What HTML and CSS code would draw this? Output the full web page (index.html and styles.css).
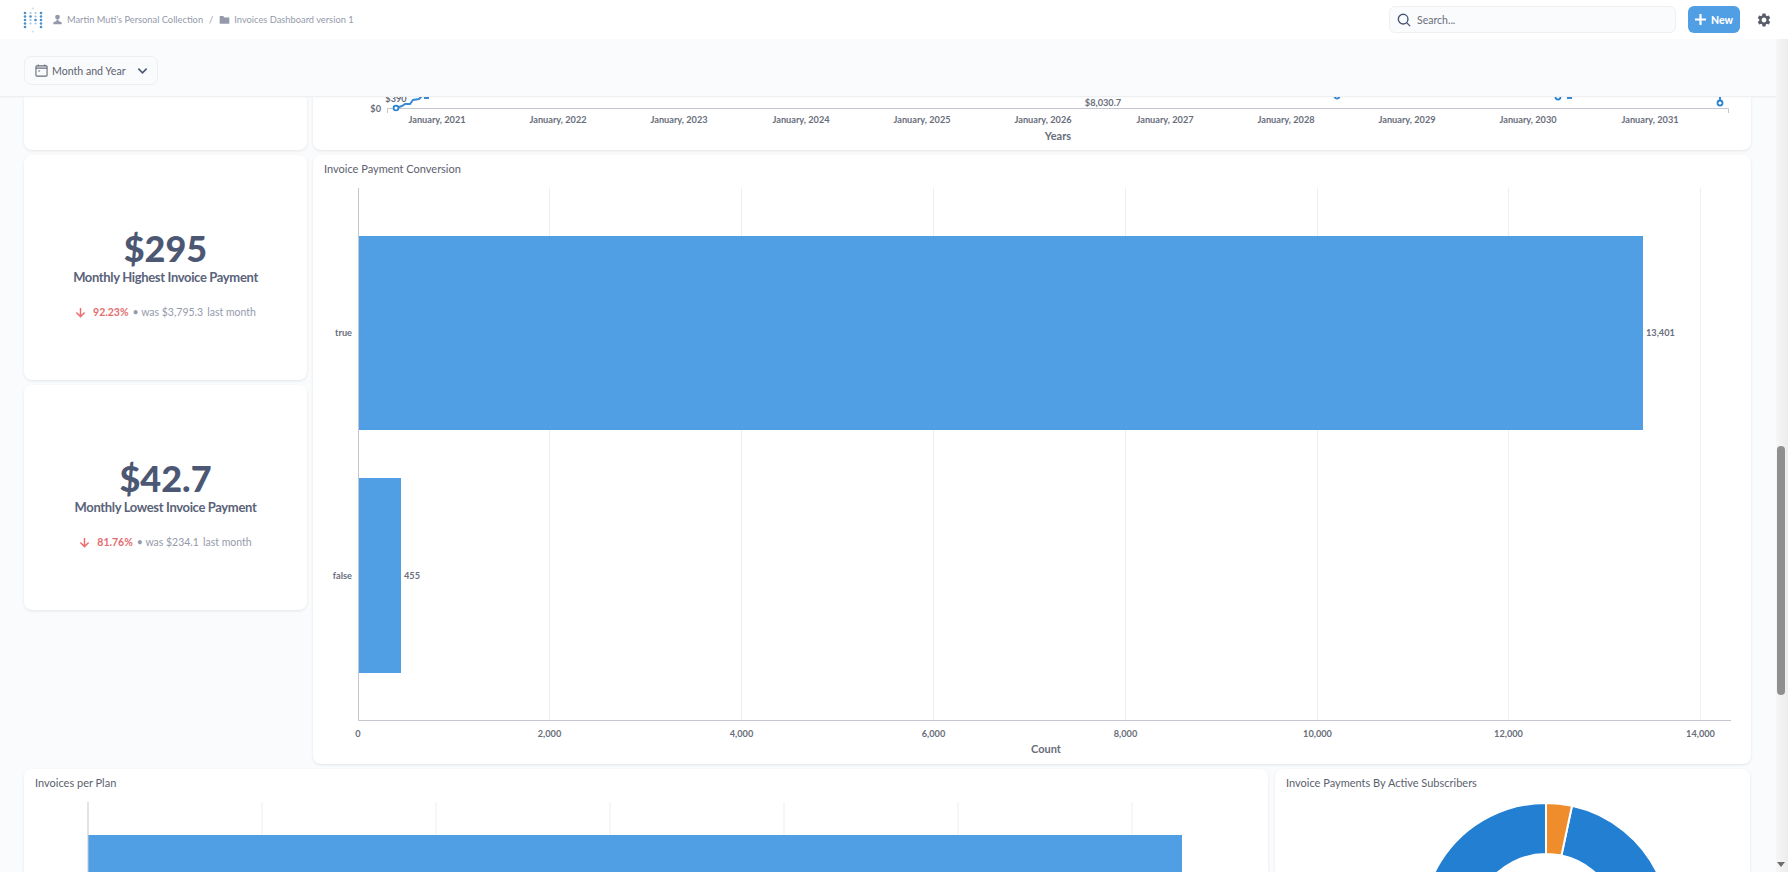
FILE: index.html
```html
<!DOCTYPE html>
<html lang="en">

<head>
    <meta charset="UTF-8">
    <meta name="viewport" content="width=device-width, initial-scale=1.0">
    <title>Invoices Dashboard version 1</title>
    <link rel="stylesheet" href="styles.css">
</head>

<body>
    <header class="topbar">
        <svg class="logo" viewBox="0 0 20 26" width="20" height="26">
            <g fill="#4a90c8">
                <circle cx="10" cy="1.500" r="0.9" opacity="0.3" />
                <circle cx="10" cy="24.500" r="0.9" opacity="0.3" />
                <circle cx="2" cy="6" r="1.300" />
                <circle cx="7.500" cy="6" r="1.100" opacity="0.5" />
                <circle cx="12.500" cy="6" r="1.100" opacity="0.5" />
                <circle cx="18" cy="6" r="1.300" />
                <circle cx="2" cy="9.500" r="1.300" />
                <circle cx="7.500" cy="9.500" r="1.300" />
                <circle cx="12.500" cy="9.500" r="1.100" opacity="0.6" />
                <circle cx="18" cy="9.500" r="1.300" />
                <circle cx="2" cy="13" r="1.300" />
                <circle cx="7.500" cy="13" r="1.100" opacity="0.6" />
                <circle cx="12.500" cy="13" r="1.300" />
                <circle cx="18" cy="13" r="1.300" />
                <circle cx="2" cy="16.500" r="1.300" />
                <circle cx="7.500" cy="16.500" r="1.100" opacity="0.5" />
                <circle cx="12.500" cy="16.500" r="1.100" opacity="0.5" />
                <circle cx="18" cy="16.500" r="1.300" />
                <circle cx="2" cy="20" r="1.300" />
                <circle cx="18" cy="20" r="1.300" />
            </g>
        </svg>
        <nav class="crumbs">
            <svg viewBox="0 0 16 16" width="11" height="11" fill="#949aab">
                <circle cx="8" cy="4.500" r="3.500" />
                <path d="M6.500 8h3v2l4.500 2v3H2v-3l4.500-2z" />
            </svg>
            <span>Martin Muti's Personal Collection</span>
            <span class="crumb-sep">/</span>
            <svg viewBox="0 0 16 16" width="11" height="11" fill="#949aab">
                <path d="M1 3h5l2 2h7v9H1z" />
            </svg>
            <span>Invoices Dashboard version 1</span>
        </nav>
        <div class="search">
            <svg viewBox="0 0 16 16" width="14" height="14" fill="none" stroke="#4c5773" stroke-width="1.600">
                <circle cx="7" cy="7" r="5.500" />
                <path d="M11 11l4 4" />
            </svg>
            <span>Search...</span>
        </div>
        <button class="new-button">
            <svg viewBox="0 0 12 12" width="11" height="11" fill="none" stroke="#fff" stroke-width="2.400">
                <path d="M6 0v12M0 6h12" />
            </svg>
            New
        </button>
        <svg class="gear" viewBox="0 0 24 24" width="16" height="16" fill="#575c68">
            <path d="M19.140 12.940c.04-.3.06-.61.06-.94 0-.32-.02-.64-.07-.94l2.030-1.580a.49.49 0 0 0 .12-.61l-1.920-3.320a.488.488 0 0 0-.59-.22l-2.390.96c-.5-.38-1.030-.7-1.620-.94l-.36-2.540a.484.484 0 0 0-.48-.41h-3.840c-.24 0-.43.17-.47.41l-.36 2.540c-.59.24-1.130.57-1.620.94l-2.390-.96c-.22-.08-.47 0-.59.22L2.740 8.870c-.12.21-.08.47.12.61l2.030 1.580c-.05.3-.09.63-.09.94s.02.64.07.94l-2.030 1.580a.49.49 0 0 0-.12.61l1.920 3.320c.12.22.37.29.59.22l2.390-.96c.5.38 1.030.7 1.620.94l.36 2.540c.05.24.24.41.48.41h3.840c.24 0 .44-.17.47-.41l.36-2.540c.59-.24 1.130-.56 1.620-.94l2.390.96c.22.08.47 0 .59-.22l1.920-3.320c.12-.22.07-.47-.12-.61l-2.010-1.580zM12 15.600c-1.980 0-3.600-1.620-3.600-3.600s1.620-3.600 3.600-3.600 3.600 1.620 3.600 3.600-1.620 3.600-3.600 3.600z" />
        </svg>
    </header>

    <div class="filterbar">
        <div class="filter">
            <svg viewBox="0 0 14 14" width="13" height="13" fill="none" stroke="#696e7b" stroke-width="1.200">
                <rect x="1" y="2" width="12" height="11" rx="1" />
                <path d="M1 4.500h12M3.500 0.500v2M10.500 0.500v2" />
                <path d="M3.500 7.500h2" />
            </svg>
            <span>Month and Year</span>
            <svg viewBox="0 0 12 12" width="11" height="11" fill="none" stroke="#4c5773" stroke-width="1.800">
                <path d="M1.500 4l4.500 4.500L10.500 4" />
            </svg>
        </div>
    </div>

    <main class="dashboard">
        <div class="row row-top">
            <div class="card card-left card-cut"></div>
            <div class="card card-main card-cut">
                <svg class="chart" viewBox="0 0 1438 53" width="1438" height="53">
                    <path class="axis" d="M74.500 16V11.500H1415.500V16" />
                    <polyline class="line" points="83,11 89,9 92,7 97,7 100,3 106,2 110,-2" />
                    <path class="line" d="M1407 4V-4" />
                    <circle class="dot" cx="83" cy="11" r="2.400" />
                    <circle class="dot" cx="1024" cy="-1" r="2.500" />
                    <circle class="dot" cx="1245" cy="0" r="2.500" />
                    <circle class="dot" cx="1407" cy="6" r="2.500" />
                    <path class="line" d="M111 1H116M1254 1H1259" />
                    <text class="tick tick-end" x="68" y="15">$0</text>
                    <text class="tick tick-mid" x="83" y="5">$390</text>
                    <text class="tick tick-mid" x="790" y="9">$8,030.7</text>
                    <text class="tick tick-mid" x="124" y="26">January, 2021</text>
                    <text class="tick tick-mid" x="245" y="26">January, 2022</text>
                    <text class="tick tick-mid" x="366" y="26">January, 2023</text>
                    <text class="tick tick-mid" x="488" y="26">January, 2024</text>
                    <text class="tick tick-mid" x="609" y="26">January, 2025</text>
                    <text class="tick tick-mid" x="730" y="26">January, 2026</text>
                    <text class="tick tick-mid" x="852" y="26">January, 2027</text>
                    <text class="tick tick-mid" x="973" y="26">January, 2028</text>
                    <text class="tick tick-mid" x="1094" y="26">January, 2029</text>
                    <text class="tick tick-mid" x="1215" y="26">January, 2030</text>
                    <text class="tick tick-mid" x="1337" y="26">January, 2031</text>
                    <text class="axis-title" x="745" y="43">Years</text>
                </svg>
            </div>
        </div>

        <div class="row">
            <div class="stats">
                <div class="card stat">
                    <div class="stat-value">$295</div>
                    <div class="stat-title">Monthly Highest Invoice Payment</div>
                    <div class="stat-delta">
                        <svg viewBox="0 0 12 12" width="11" height="11" fill="none" stroke="#ed6e6e" stroke-width="1.600">
                            <path d="M6 1v9.500M1.500 6L6 10.500 10.500 6" />
                        </svg>
                        <b>92.23%</b>
                        <span>• was $3,795.3</span>
                        <span>last month</span>
                    </div>
                </div>
                <div class="card stat">
                    <div class="stat-value">$42.7</div>
                    <div class="stat-title">Monthly Lowest Invoice Payment</div>
                    <div class="stat-delta">
                        <svg viewBox="0 0 12 12" width="11" height="11" fill="none" stroke="#ed6e6e" stroke-width="1.600">
                            <path d="M6 1v9.500M1.500 6L6 10.500 10.500 6" />
                        </svg>
                        <b>81.76%</b>
                        <span>• was $234.1</span>
                        <span>last month</span>
                    </div>
                </div>
            </div>
            <div class="card card-main card-conversion">
                <div class="card-title">Invoice Payment Conversion</div>
                <svg class="chart" viewBox="0 0 1438 583" width="1438" height="583">
                    <path class="grid" d="M236.500 7V539M428.500 7V539M620.500 7V539M812.500 7V539M1004.500 7V539M1195.500 7V539M1387.500 7V539" />
                    <rect class="bar" x="45" y="55" width="1285" height="194" />
                    <rect class="bar" x="45" y="297" width="43" height="195" />
                    <path class="axis" d="M45.500 7V539.500H1418" />
                    <text class="tick tick-end" x="39" y="155">true</text>
                    <text class="tick tick-end" x="39" y="398">false</text>
                    <text class="tick" x="1333" y="155">13,401</text>
                    <text class="tick" x="91" y="398">455</text>
                    <text class="tick tick-mid" x="45" y="556">0</text>
                    <text class="tick tick-mid" x="236.500" y="556">2,000</text>
                    <text class="tick tick-mid" x="428.500" y="556">4,000</text>
                    <text class="tick tick-mid" x="620.500" y="556">6,000</text>
                    <text class="tick tick-mid" x="812.500" y="556">8,000</text>
                    <text class="tick tick-mid" x="1004.500" y="556">10,000</text>
                    <text class="tick tick-mid" x="1195.500" y="556">12,000</text>
                    <text class="tick tick-mid" x="1387.500" y="556">14,000</text>
                    <text class="axis-title" x="733" y="572">Count</text>
                </svg>
            </div>
        </div>

        <div class="row">
            <div class="card card-plan">
                <div class="card-title">Invoices per Plan</div>
                <svg class="chart" viewBox="0 0 1244 77" width="1244" height="77">
                    <path class="grid" d="M238 7V70M412 7V70M586 7V70M760 7V70M934 7V70M1108 7V70" />
                    <rect class="bar" x="64" y="40" width="1094" height="60" />
                    <path class="axis" d="M64 7V80" />
                </svg>
            </div>
            <div class="card card-donut">
                <div class="card-title">Invoice Payments By Active Subscribers</div>
                <svg class="chart" viewBox="0 0 475 77" width="475" height="77">
                    <g transform="translate(271 132)">
                        <path fill="#227fd2" stroke="#fff" stroke-width="2" d="M26 -121.200A124 124 0 1 1 0 -124V-73A73 73 0 1 0 15.400 -71.400Z" />
                        <path fill="#ef8c2c" stroke="#fff" stroke-width="2" d="M0 -124A124 124 0 0 1 26 -121.200L15.400 -71.400A73 73 0 0 0 0 -73Z" />
                    </g>
                </svg>
            </div>
        </div>
    </main>

    <div class="scrollbar">
        <div class="scroll-thumb"></div>
        <div class="scroll-arrow"></div>
    </div>
</body>

</html>
```

FILE: styles.css
```css
* {
    box-sizing: border-box;
}

body {
    font-family: Lato, "Open Sans", sans-serif;
    background-color: #f9fbfc;
    color: #4c5773;
    margin: 0;
    height: 100vh;
    overflow: hidden;
    display: flex;
    flex-direction: column;
}

.topbar {
    height: 39px;
    flex-shrink: 0;
    background-color: #fff;
    display: flex;
    align-items: center;
    padding: 0 16px 0 23px;
}

.logo {
    margin-right: 9px;
}

.crumbs {
    display: flex;
    align-items: center;
    gap: 4px;
    font-size: 9.300px;
    color: #949aab;
    flex: 1;
}

.crumb-sep {
    margin: 0 2px;
}

.search {
    width: 287px;
    height: 27px;
    background-color: #f9fbfc;
    border: 1px solid #f0f0f0;
    border-radius: 6px;
    display: flex;
    align-items: center;
    gap: 6px;
    padding-left: 7px;
    font-size: 10.500px;
    color: #696e7b;
}

.new-button {
    width: 52px;
    height: 27px;
    margin-left: 12px;
    border: 0;
    border-radius: 6px;
    background-color: #509ee3;
    color: #fff;
    font-family: inherit;
    font-size: 10.500px;
    font-weight: 900;
    display: flex;
    align-items: center;
    justify-content: center;
    gap: 5px;
}

.gear {
    margin-left: 16px;
}

.filterbar {
    height: 58px;
    flex-shrink: 0;
    padding: 17px 0 0 24px;
    border-bottom: 1px solid #eeeff1;
    box-shadow: 0 1px 2px rgba(0, 0, 0, 0.03);
    position: relative;
}

.filter {
    width: 134px;
    height: 29px;
    border: 1px solid #eeeff1;
    border-radius: 7px;
    display: flex;
    align-items: center;
    padding: 0 9px 0 10px;
    gap: 4px;
    font-size: 10.600px;
    color: #5c616e;
}

.filter span {
    flex: 1;
    white-space: nowrap;
}

.dashboard {
    flex: 1;
    overflow: hidden;
    padding: 0 37px 0 24px;
    display: flex;
    flex-direction: column;
    gap: 5px;
}

.row {
    display: flex;
    gap: 6px;
    flex-shrink: 0;
}

.row-top {
    height: 53px;
}

.card {
    background-color: #fff;
    border-radius: 8px;
    box-shadow: 0 1px 3px rgba(0, 0, 0, 0.09);
}

.card-cut {
    border-top-left-radius: 0;
    border-top-right-radius: 0;
}

.card-left {
    width: 283px;
}

.card-main {
    width: 1438px;
    overflow: hidden;
}

.card-conversion {
    height: 609px;
}

.card-title {
    height: 26px;
    padding: 6px 0 0 11px;
    font-size: 11px;
    line-height: 15px;
    color: #5c616e;
}

.chart {
    display: block;
}

.axis {
    fill: none;
    stroke: #c4c7cf;
    stroke-width: 1;
}

.grid {
    fill: none;
    stroke: #eeeff1;
    stroke-width: 1;
}

.bar {
    fill: #509ee3;
}

.line {
    fill: none;
    stroke: #3a8bd6;
    stroke-width: 2;
}

.dot {
    fill: #fff;
    stroke: #2d83d3;
    stroke-width: 1.800;
}

.tick {
    font-size: 9.200px;
    font-weight: 700;
    fill: #696e7b;
}

.tick-end {
    text-anchor: end;
}

.tick-mid {
    text-anchor: middle;
}

.axis-title {
    font-size: 11px;
    font-weight: 700;
    fill: #696e7b;
    text-anchor: middle;
}

.stats {
    width: 283px;
    display: flex;
    flex-direction: column;
    gap: 5px;
    flex-shrink: 0;
}

.stat {
    height: 225px;
    padding-top: 73px;
    text-align: center;
}

.stat-value {
    font-size: 36px;
    line-height: 40px;
    font-weight: 900;
}

.stat-title {
    font-size: 13px;
    letter-spacing: -0.35px;
    line-height: 20px;
    margin-top: -1px;
    font-weight: 700;
    color: #5a6379;
}

.stat-delta {
    margin-top: 17px;
    font-size: 10.500px;
    line-height: 16px;
    color: #949aab;
    display: flex;
    justify-content: center;
    align-items: center;
    gap: 4px;
}

.stat-delta svg {
    margin-right: 3px;
}

.stat-delta b {
    color: #e36d6d;
    font-weight: 700;
}

.card-plan {
    width: 1244px;
    height: 103px;
    overflow: hidden;
    border-bottom-left-radius: 0;
    border-bottom-right-radius: 0;
}

.card-donut {
    width: 475px;
    height: 103px;
    overflow: hidden;
    margin-left: 1px;
    border-bottom-left-radius: 0;
    border-bottom-right-radius: 0;
}

.scrollbar {
    position: absolute;
    top: 39px;
    right: 0;
    bottom: 0;
    width: 12px;
    background: linear-gradient(to right, #f6f6f6, #ececec);
}

.scroll-thumb {
    position: absolute;
    top: 407px;
    left: 1px;
    width: 8px;
    height: 249px;
    border-radius: 4px;
    background-color: #8f8f8f;
}

.scroll-arrow {
    position: absolute;
    bottom: 5px;
    left: 1px;
    width: 0;
    height: 0;
    border-left: 4px solid transparent;
    border-right: 4px solid transparent;
    border-top: 5px solid #6e6e6e;
}
```
